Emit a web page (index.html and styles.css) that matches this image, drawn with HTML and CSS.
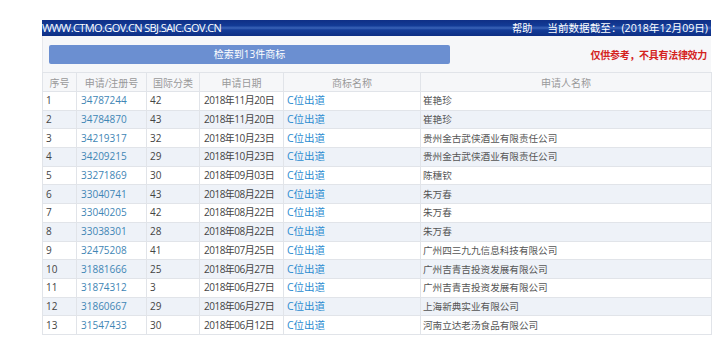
FILE: index.html
```html
<!DOCTYPE html>
<html lang="zh-CN">
<head>
<meta charset="utf-8">
<link rel="stylesheet" href="styles.css">
</head>
<body>
<div class="wrap">
  <div class="topbar">
    <span class="site">WWW.CTMO.GOV.CN SBJ.SAIC.GOV.CN</span>
    <span class="right"><span class="help">帮助</span><span class="date">当前数据截至：(2018年12月09日)</span></span>
  </div>
  <div class="toolbar">
    <div class="btn">检索到13件商标</div>
    <div class="notice">仅供参考，不具有法律效力</div>
  </div>
  <table class="grid">
    <colgroup>
      <col class="c1"><col class="c2"><col class="c3"><col class="c4"><col class="c5"><col class="c6">
    </colgroup>
    <thead>
      <tr><th>序号</th><th>申请/注册号</th><th>国际分类</th><th>申请日期</th><th>商标名称</th><th>申请人名称</th></tr>
    </thead>
    <tbody>
      <tr><td>1</td><td class="lnk">34787244</td><td>42</td><td class="dt">2018年11月20日</td><td class="mark">C位出道</td><td class="app">崔艳珍</td></tr>
      <tr><td>2</td><td class="lnk">34784870</td><td>43</td><td class="dt">2018年11月20日</td><td class="mark">C位出道</td><td class="app">崔艳珍</td></tr>
      <tr><td>3</td><td class="lnk">34219317</td><td>32</td><td class="dt">2018年10月23日</td><td class="mark">C位出道</td><td class="app">贵州金古武侠酒业有限责任公司</td></tr>
      <tr><td>4</td><td class="lnk">34209215</td><td>29</td><td class="dt">2018年10月23日</td><td class="mark">C位出道</td><td class="app">贵州金古武侠酒业有限责任公司</td></tr>
      <tr><td>5</td><td class="lnk">33271869</td><td>30</td><td class="dt">2018年09月03日</td><td class="mark">C位出道</td><td class="app">陈穗钦</td></tr>
      <tr><td>6</td><td class="lnk">33040741</td><td>43</td><td class="dt">2018年08月22日</td><td class="mark">C位出道</td><td class="app">朱万春</td></tr>
      <tr><td>7</td><td class="lnk">33040205</td><td>42</td><td class="dt">2018年08月22日</td><td class="mark">C位出道</td><td class="app">朱万春</td></tr>
      <tr><td>8</td><td class="lnk">33038301</td><td>28</td><td class="dt">2018年08月22日</td><td class="mark">C位出道</td><td class="app">朱万春</td></tr>
      <tr><td>9</td><td class="lnk">32475208</td><td>41</td><td class="dt">2018年07月25日</td><td class="mark">C位出道</td><td class="app">广州四三九九信息科技有限公司</td></tr>
      <tr><td>10</td><td class="lnk">31881666</td><td>25</td><td class="dt">2018年06月27日</td><td class="mark">C位出道</td><td class="app">广州吉青吉投资发展有限公司</td></tr>
      <tr><td>11</td><td class="lnk">31874312</td><td>3</td><td class="dt">2018年06月27日</td><td class="mark">C位出道</td><td class="app">广州吉青吉投资发展有限公司</td></tr>
      <tr><td>12</td><td class="lnk">31860667</td><td>29</td><td class="dt">2018年06月27日</td><td class="mark">C位出道</td><td class="app">上海新典实业有限公司</td></tr>
      <tr><td>13</td><td class="lnk">31547433</td><td>30</td><td class="dt">2018年06月12日</td><td class="mark">C位出道</td><td class="app">河南立达老汤食品有限公司</td></tr>
    </tbody>
  </table>
</div>
</body>
</html>
```
FILE: styles.css
```css
html, body {
  margin: 0;
  padding: 0;
  background: #ffffff;
}
body {
  font-family: "Open Sans", "Noto Sans CJK SC", sans-serif;
  color: #444;
}
.wrap {
  margin: 20px 0 0 42px;
  width: 669px;
}
.topbar {
  height: 16px;
  display: flex;
  align-items: center;
  justify-content: space-between;
  background: linear-gradient(to bottom, #0f2f86 0%, #123a95 35%, #3a64b8 50%, #143c98 62%, #0d2e84 100%);
  color: #ffffff;
  font-size: 11px;
  line-height: 16px;
}
.site {
  letter-spacing: -0.6px;
}
.right {
  display: flex;
  gap: 15px;
  padding-right: 3px;
  font-size: 10.6px;
}
.help {
  font-size: 10px;
}
.toolbar {
  height: 36px;
  display: flex;
  align-items: center;
  justify-content: space-between;
  background: #f6f7f9;
  border-left: 1px solid #e6e8ec;
  padding: 0 4px 0 6px;
}
.btn {
  width: 401px;
  height: 19px;
  line-height: 19px;
  background: #6b8fd1;
  color: #ffffff;
  font-size: 10px;
  text-align: center;
  border-radius: 2px;
}
.notice {
  color: #d4231d;
  font-size: 10px;
  font-weight: bold;
  letter-spacing: -0.3px;
}
.grid {
  width: 669px;
  border-collapse: collapse;
  table-layout: fixed;
  font-size: 10px;
}
.c1 { width: 34px; }
.c2 { width: 70px; }
.c3 { width: 53px; }
.c4 { width: 84px; }
.c5 { width: 137px; }
.c6 { width: 291px; }
.grid th {
  height: 18px;
  font-weight: normal;
  color: #999;
  font-size: 10px;
  background: #f6f7f9;
  border: 1px solid #e1e4e9;
  padding: 0;
  text-align: center;
}
.grid td {
  height: 17.7px;
  padding: 0 0 0 3px;
  border: 1px solid #e1e4e9;
  color: #444;
  white-space: nowrap;
  line-height: 17px;
}
.grid tbody tr:nth-child(even) td {
  background: #eef2f8;
}
.grid td.lnk {
  color: #3f86b5;
  padding-left: 4px;
}
.grid td.dt {
  padding-left: 4px;
  font-size: 10px;
  letter-spacing: -0.5px;
}
.grid td.mark {
  color: #2c8bd0;
  padding-left: 3px;
  font-size: 10.5px;
}
.grid td.app {
  font-size: 9.6px;
  color: #555;
  padding-left: 2px;
}
```
